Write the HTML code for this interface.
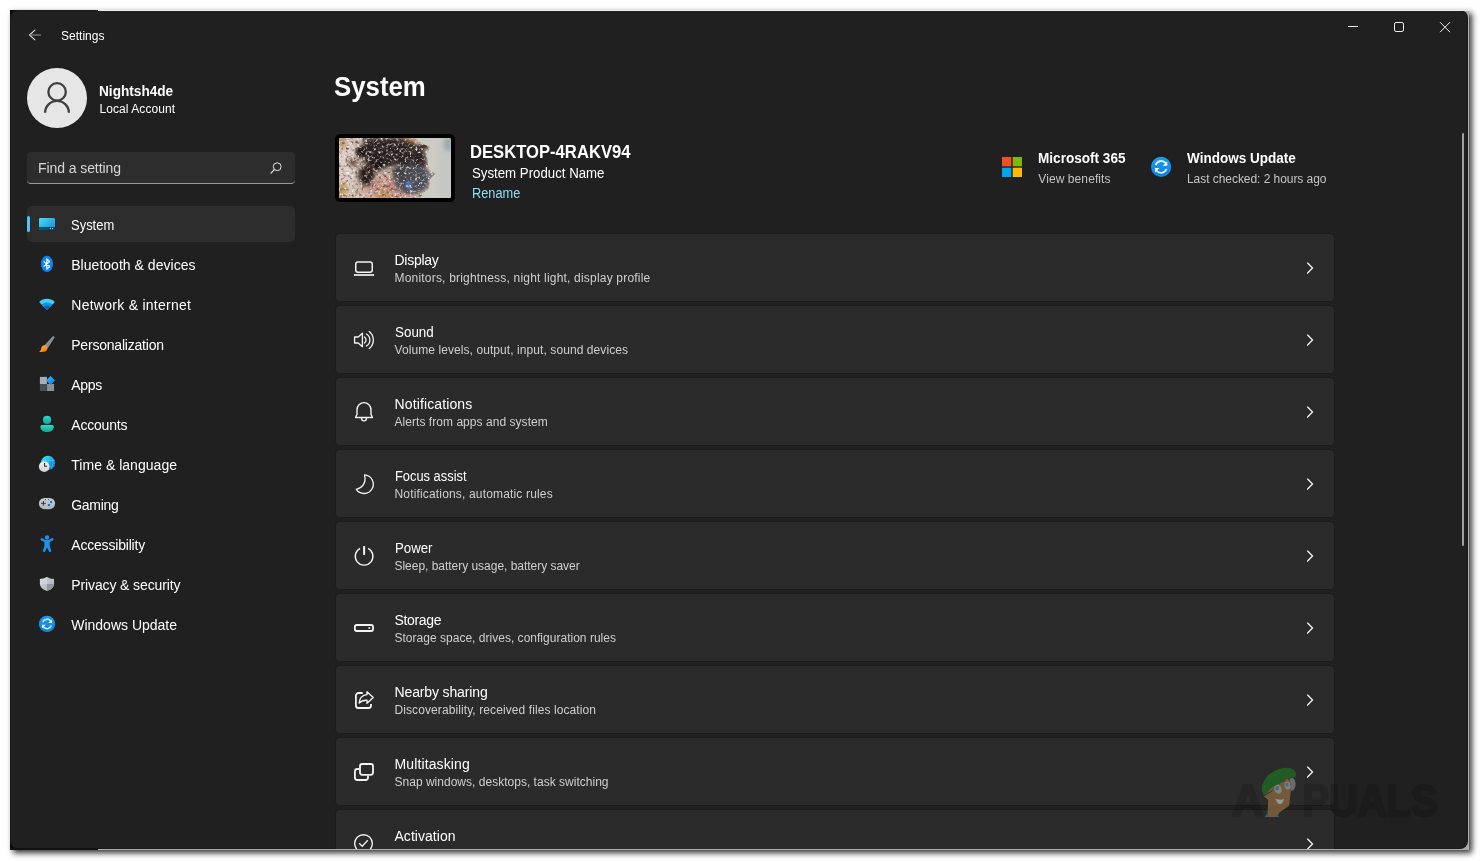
<!DOCTYPE html>
<html lang="en">
<head>
<meta charset="utf-8">
<title>Settings</title>
<style>
html,body{margin:0;padding:0;background:#fff;}
body{width:1480px;height:861px;position:relative;overflow:hidden;font-family:"Liberation Sans",sans-serif;color:#fff;}
.abs{position:absolute;}
#shadow{left:10px;top:10px;width:1459px;height:840px;background:#adadad;box-shadow:2.5px 3px 6px rgba(0,0,0,.8);}
#topstrip{left:98px;top:10px;width:1371px;height:1px;background:#ededed;}
#win{left:10px;top:10px;width:1458px;height:839px;background:#202020;border-radius:8px;overflow:hidden;box-shadow:inset 0 0 0 1px rgba(0,0,0,.2);}
.blk{width:10px;height:10px;background:#03070a;}
#win2{left:98px;top:11px;}
.t{position:absolute;white-space:pre;line-height:1;transform-origin:0 50%;}
.card{position:absolute;left:336px;width:997.5px;height:67px;background:#2b2b2b;border-radius:4px;box-shadow:0 0 0 1px #1c1c1c;}
#sel{left:27px;top:206px;width:268px;height:36px;background:#2d2d2d;border-radius:5px;}
#pill{left:27px;top:216px;width:3px;height:16px;background:#4cc2ff;border-radius:1.5px;}
#search{left:27px;top:152px;width:268px;height:32px;background:#2d2d2d;border-radius:4px;box-sizing:border-box;border-bottom:1px solid #9a9a9a;}
#avatar{left:27px;top:68px;width:60px;height:60px;border-radius:50%;background:#e6e6e6;}
#scroll{left:1462px;top:133px;width:2px;height:413px;background:#a0a0a0;border-radius:1px;}
svg{position:absolute;overflow:visible;}
</style>
</head>
<body>
<div id="shadow" class="abs"></div>
<div class="abs blk" style="left:10px;top:10px"></div><div class="abs blk" style="left:10px;top:839.5px"></div>
<div id="win" class="abs"></div>
<div id="topstrip" class="abs"></div>
<div class="abs" style="left:10px;top:848px;width:88px;height:2px;background:#101214"></div>
<div id="chrome" class="abs" style="left:0;top:0;width:1468px;height:849px;overflow:hidden;will-change:transform">
<div id="avatar" class="abs"></div>
<div id="search" class="abs"></div>
<div id="sel" class="abs"></div>
<div id="pill" class="abs"></div>
<div id="scroll" class="abs"></div>
<div class="card" style="top:234px"></div>
<div class="card" style="top:306px"></div>
<div class="card" style="top:378px"></div>
<div class="card" style="top:450px"></div>
<div class="card" style="top:522px"></div>
<div class="card" style="top:594px"></div>
<div class="card" style="top:666px"></div>
<div class="card" style="top:738px"></div>
<div class="card" style="top:810px"></div>

<!--THUMB_START-->
<div class="abs" style="left:335px;top:134px;width:120px;height:68px;background:#000;border-radius:5.5px;"></div>
<svg width="112" height="60" viewBox="0 0 112 60" style="left:339px;top:138px;overflow:hidden;border-radius:1.5px">
<defs>
<filter id="b2" x="-30%" y="-30%" width="160%" height="160%"><feGaussianBlur stdDeviation="1.3"/></filter>
<filter id="b3" x="-30%" y="-30%" width="160%" height="160%"><feGaussianBlur stdDeviation="2.2"/></filter>
<filter id="b5" x="-30%" y="-30%" width="160%" height="160%"><feGaussianBlur stdDeviation="4"/></filter>
<filter id="spk" x="0" y="0" width="100%" height="100%">
<feTurbulence type="fractalNoise" baseFrequency="0.38" numOctaves="2" seed="7" result="n"/>
<feColorMatrix in="n" type="matrix" values="0 0 0 0 0.93  0 0 0 0 0.9  0 0 0 0 0.88  3.6 0 0 0 -1.95"/>
</filter>
<filter id="spd" x="0" y="0" width="100%" height="100%">
<feTurbulence type="fractalNoise" baseFrequency="0.3" numOctaves="2" seed="23" result="n"/>
<feColorMatrix in="n" type="matrix" values="0 0 0 0 0.12  0 0 0 0 0.08  0 0 0 0 0.07  0 3.8 0 0 -2.0"/>
</filter>
<filter id="spg" x="0" y="0" width="100%" height="100%">
<feTurbulence type="fractalNoise" baseFrequency="0.6" numOctaves="1" seed="3" result="n"/>
<feColorMatrix in="n" type="matrix" values="0 0 0 0 0.55  0 0 0 0 0.58  0 0 0 0 0.58  0 0 2.6 0 -1.35"/>
</filter>
<clipPath id="cLeft"><path d="M0 0 H75 L84 6 L91 9 L88 16 L89 28 L92 33 L97 35 L91 41 L90 50 L84 56 L81 60 H0 Z"/></clipPath>
</defs>
<rect width="112" height="60" fill="#cccbc4"/>
<rect x="100" width="12" height="60" fill="#c3c6c2" filter="url(#b5)"/>
<ellipse cx="109" cy="6" rx="4" ry="7" fill="#98a6ab" filter="url(#b3)"/>
<rect x="76" width="36" height="60" filter="url(#spg)" opacity=".35"/>
<!-- left textured area -->
<g clip-path="url(#cLeft)">
<rect width="98" height="60" fill="#cdb6a8"/>
<ellipse cx="7" cy="28" rx="10" ry="30" fill="#dccfc6" filter="url(#b5)"/>
<ellipse cx="3" cy="52" rx="6" ry="9" fill="#c4a06a" filter="url(#b3)"/>
<ellipse cx="3" cy="5" rx="4" ry="6" fill="#c2935c" filter="url(#b3)"/>
<ellipse cx="50" cy="50" rx="24" ry="11" fill="#c48f80" filter="url(#b5)"/>
<ellipse cx="68" cy="3" rx="9" ry="4" fill="#cc8c62" filter="url(#b3)"/>
<ellipse cx="44" cy="57" rx="8" ry="4" fill="#c0905a" filter="url(#b3)"/>
<!-- dark mass: diagonal band -->
<path d="M27 0 H62 L76 6 L86 14 L88 28 L80 33 L68 30 L58 27 L46 30 L38 34 L28 30 L24 20 L22 10 Z" fill="#2a2320" filter="url(#b3)"/>
<ellipse cx="38" cy="25" rx="5" ry="5" fill="#15110f" filter="url(#b2)"/>
<path d="M64 23 L78 31 L75 34 L62 28 Z" fill="#221c19" filter="url(#b2)"/>
<ellipse cx="22" cy="14" rx="5.5" ry="5.5" fill="#1d1816" filter="url(#b2)"/>
<path d="M62 13 L88 5 L90 9 L72 17 Z" fill="#3a312b" filter="url(#b2)"/>
<!-- lower-left dark stripes -->
<path d="M20 30 L30 26 L36 34 L32 46 L24 48 L19 40 Z" fill="#35261f" filter="url(#b3)"/>
<path d="M24 33 L33 42 M22 38 L30 47 M28 30 L35 38" stroke="#1d1512" stroke-width="2" fill="none" filter="url(#b2)"/>
<ellipse cx="14" cy="24" rx="5" ry="4" fill="#6a4a3a" filter="url(#b3)"/>
<!-- grey-blue speckled area -->
<ellipse cx="73" cy="41" rx="18" ry="15" fill="#484c54" filter="url(#b3)"/>
<ellipse cx="60" cy="34" rx="7" ry="6" fill="#3a3c42" filter="url(#b3)"/>
<ellipse cx="70" cy="47.5" rx="3.6" ry="4.4" fill="#5b7cb8" opacity=".85" filter="url(#b2)"/>
<path d="M86 37 L97 35 L91 42 Z" fill="#707a86" filter="url(#b2)"/>
<rect width="112" height="60" filter="url(#spd)" opacity=".9"/>
<rect width="112" height="60" filter="url(#spk)" opacity=".9"/>
</g>
</svg>

<!--THUMB_END-->
<!--ICONS_START-->
<svg id="ico" width="1480" height="861" viewBox="0 0 1480 861" style="left:0;top:0">
<defs>
<linearGradient id="gSys" x1="0" y1="0" x2="1" y2="1"><stop offset="0" stop-color="#45e0ea"/><stop offset="1" stop-color="#1788de"/></linearGradient>
<linearGradient id="gSysB" x1="0" y1="0" x2="1" y2="0"><stop offset="0" stop-color="#0d5a7c"/><stop offset="1" stop-color="#083c6c"/></linearGradient>
<linearGradient id="gBrushH" x1="0" y1="0" x2="1" y2="1"><stop offset="0" stop-color="#a3aebb"/><stop offset="1" stop-color="#67727e"/></linearGradient>
<linearGradient id="gBrushB" x1="0" y1="0" x2="1" y2="1"><stop offset="0" stop-color="#ffc61e"/><stop offset="1" stop-color="#fb6414"/></linearGradient>
<linearGradient id="gDia" x1="0" y1="0" x2="1" y2="1"><stop offset="0" stop-color="#2fc0fb"/><stop offset="1" stop-color="#0b78de"/></linearGradient>
<linearGradient id="gAcc" x1="0" y1="0" x2="0" y2="1"><stop offset="0" stop-color="#28dcc8"/><stop offset="1" stop-color="#13a596"/></linearGradient>
<linearGradient id="gGlobe" x1="0" y1="0" x2="1" y2="1"><stop offset=".2" stop-color="#2fdcec"/><stop offset=".85" stop-color="#0c6fd6"/></linearGradient>
<linearGradient id="gClock" x1="0" y1="0" x2="0" y2="1"><stop offset="0" stop-color="#f0f0f3"/><stop offset="1" stop-color="#d2d2d6"/></linearGradient>
<linearGradient id="gPad" x1="0" y1="0" x2="0" y2="1"><stop offset="0" stop-color="#c9cdd3"/><stop offset="1" stop-color="#b3b7bd"/></linearGradient>
<linearGradient id="gShield" x1="0" y1="0" x2="1" y2="1"><stop offset="0" stop-color="#d2d6dd"/><stop offset="1" stop-color="#a9adb5"/></linearGradient>
<linearGradient id="gWU" x1="0" y1="0" x2="0" y2="1"><stop offset="0" stop-color="#1c9cf0"/><stop offset="1" stop-color="#0f84e2"/></linearGradient>
<g id="chev"><path d="M1307.6 263.1 L1312.5 268 L1307.6 273" fill="none" stroke="#f2f2f2" stroke-width="1.35" stroke-linecap="round" stroke-linejoin="miter"/></g>
<g id="wu"><circle cx="0" cy="0" r="8.1" fill="url(#gWU)"/>
<path d="M-4.3 -1.6 A4.6 4.6 0 0 1 3.6 -3.0" fill="none" stroke="#fff" stroke-width="1.25"/>
<path d="M4.9 -4.4 V-0.9 H1.4 Z" fill="#fff"/>
<path d="M4.3 1.6 A4.6 4.6 0 0 1 -3.6 3.0" fill="none" stroke="#fff" stroke-width="1.25"/>
<path d="M-4.9 4.4 V0.9 H-1.4 Z" fill="#fff"/></g>
</defs>

<!-- title bar -->
<path d="M34.9 30.1 L29.5 35 L34.9 39.9" fill="none" stroke="#d6d6d6" stroke-width="1.2" stroke-linecap="round" stroke-linejoin="miter"/>
<path d="M30 35 H41" stroke="#8c8c8c" stroke-width="1.1" fill="none"/>
<path d="M1348 26.5 H1358" stroke="#f0f0f0" stroke-width="1"/>
<rect x="1394.5" y="22.5" width="9" height="9" rx="1.6" fill="none" stroke="#f0f0f0" stroke-width="1"/>
<path d="M1440 22.2 L1450 32.2 M1450 22.2 L1440 32.2" stroke="#f0f0f0" stroke-width="1" fill="none"/>

<!-- avatar person -->
<circle cx="57.1" cy="91.9" r="8.7" fill="none" stroke="#404040" stroke-width="2.3"/>
<path d="M45.1 112.8 A11.9 11.9 0 0 1 68.9 112.8" fill="none" stroke="#404040" stroke-width="2.3"/>

<!-- search icon -->
<circle cx="277.2" cy="166.7" r="3.9" fill="none" stroke="#e4e4e4" stroke-width="1"/>
<path d="M274.4 169.5 L271 173.1" stroke="#e4e4e4" stroke-width="1.2" stroke-linecap="round"/>

<!-- nav: system -->
<rect x="39" y="218" width="16" height="12" rx="1.2" fill="url(#gSys)"/>
<path d="M39 227 H55 V228.8 A1.2 1.2 0 0 1 53.8 230 H40.2 A1.2 1.2 0 0 1 39 228.8 Z" fill="url(#gSysB)"/>
<rect x="49.9" y="228" width="1.1" height="1.1" fill="#a9c7d6"/><rect x="52" y="228" width="1.1" height="1.1" fill="#a9c7d6"/>
<!-- bluetooth -->
<ellipse cx="47" cy="263.9" rx="6" ry="8.1" fill="#0a84f2"/>
<path d="M43.6 261.3 L49.7 266.5 L46.8 269.2 V258.8 L49.7 261.5 L43.6 266.7" fill="none" stroke="#fff" stroke-width="1.1" stroke-linejoin="round"/>
<!-- wifi -->
<path d="M47 310 L39.1 302 A11.4 11.4 0 0 1 54.9 302 Z" fill="#3fd0f7"/>
<path d="M47 310 L41.7 304.6 A7.6 7.6 0 0 1 52.3 304.6 Z" fill="#1a90e3"/>
<path d="M47 310 L44 306.9 A4.3 4.3 0 0 1 50 306.9 Z" fill="#0e63b6"/>
<!-- brush -->
<path d="M53 335.9 Q55 336.2 54.5 337.8 L47.6 348.4 L44.2 345.7 Z" fill="url(#gBrushH)"/>
<path d="M44.4 345.2 C46.6 345 48.2 347 47.2 349.5 C46.2 352 42.2 352.4 39.1 351.7 C41 350.8 41 349.6 41.3 348.1 C41.6 346.4 42.9 345.3 44.4 345.2 Z" fill="url(#gBrushB)"/>
<!-- apps -->
<rect x="39.9" y="376.9" width="7" height="7.1" fill="#a9aeb6"/>
<rect x="39.9" y="384" width="7" height="7" fill="#4b4f53"/>
<rect x="47.05" y="384" width="7.05" height="7" fill="#8b8f96"/>
<path d="M50.55 376 L55.05 380.5 L50.55 385.1 L46.1 380.5 Z" fill="url(#gDia)"/>
<!-- accounts -->
<circle cx="47.05" cy="419.9" r="4.1" fill="url(#gAcc)"/>
<path d="M41.9 424.9 H52.3 A1.5 1.5 0 0 1 53.8 426.4 C53.8 430 51 432 47.1 432 C43.2 432 40.4 430 40.4 426.4 A1.5 1.5 0 0 1 41.9 424.9 Z" fill="url(#gAcc)"/>
<!-- time -->
<circle cx="48" cy="463" r="7.15" fill="url(#gGlobe)"/>
<path d="M41 460.5 H55 M42 466 H54.7 M48 456 V470 M44.5 457 Q41.5 463 44.5 469 M51.5 457 Q54.5 463 51.5 469" stroke="#4fe0f2" stroke-width=".6" fill="none" opacity=".7"/>
<circle cx="44.2" cy="466.6" r="5.3" fill="url(#gClock)"/>
<path d="M44.6 462.9 V466.3 H47.1" fill="none" stroke="#2a2a2a" stroke-width="1.05"/>
<!-- gaming -->
<rect x="38.9" y="497.9" width="16.2" height="11.3" rx="5.6" fill="url(#gPad)"/>
<path d="M43.4 500.9 V505.7 M41 503.3 H45.8" stroke="#34373b" stroke-width="1"/>
<circle cx="45.4" cy="499.6" r=".6" fill="#44474b"/><circle cx="48.5" cy="499.6" r=".6" fill="#44474b"/>
<rect x="50" y="500.9" width="2.1" height="2.2" fill="#0b80e2"/><rect x="47.9" y="504" width="2.2" height="2.1" fill="#0b80e2"/>
<!-- accessibility -->
<circle cx="47.05" cy="537.5" r="2.15" fill="#1b97ee"/>
<path d="M40.7 538.4 Q40.2 539.7 41.3 540.4 L44.4 541.9 V546 L42.7 551 Q43.3 552.4 44.9 551.8 L47.05 547.4 L49.2 551.8 Q50.8 552.4 51.4 551 L49.7 546 V541.9 L52.8 540.4 Q53.9 539.7 53.4 538.4 Q52.6 537.7 51.7 538.2 L48.6 539.9 H45.5 L42.4 538.2 Q41.5 537.7 40.7 538.4 Z" fill="#1b93ea"/>
<!-- privacy -->
<path d="M47 576.9 Q44 579 39.9 579 V584 Q39.9 588.6 47 591.1 Q54.1 588.6 54.1 584 V579 Q50 579 47 576.9 Z" fill="url(#gShield)"/>
<path d="M47 584 H54.1 Q54.1 588.6 47 591.1 Z" fill="#94989f"/>
<path d="M47 576.9 Q44 579 39.9 579 V584 H47 Z" fill="#d6dae0" opacity=".6"/>
<!-- windows update -->
<use href="#wu" transform="translate(47 623.9)"/>

<!-- MS logo -->
<rect x="1002" y="157" width="9.3" height="9.3" fill="#f25022"/><rect x="1012.7" y="157" width="9.3" height="9.3" fill="#7fba00"/>
<rect x="1002" y="167.7" width="9.3" height="9.3" fill="#00a4ef"/><rect x="1012.7" y="167.7" width="9.3" height="9.3" fill="#ffb900"/>
<use href="#wu" transform="translate(1161.1 166.9) scale(1.25)"/>

<!-- card icons -->
<g fill="none" stroke="#f4f4f4" stroke-width="1.5" stroke-linejoin="round">
<rect x="355.75" y="261.95" width="16.5" height="10.3" rx="2.2"/>
<path d="M353.9 275 H374.1" stroke-width="1.7"/>
</g>
<g fill="none" stroke="#f4f4f4" stroke-width="1.3" stroke-linejoin="round" stroke-linecap="round">
<path d="M354.6 337 H358.2 L362.4 333.3 V346.7 L358.2 343 H354.6 Z"/>
<path d="M364.4 337 A3.6 3.6 0 0 1 364.4 343"/>
<path d="M366.4 334 A6.9 6.9 0 0 1 366.4 346"/>
<path d="M369.3 331.4 A11.2 11.2 0 0 1 369.3 348.6"/>
</g>
<g fill="none" stroke="#f4f4f4" stroke-width="1.4" stroke-linejoin="round" stroke-linecap="round">
<path d="M357 409.6 A7 7 0 0 1 371 409.6 V414.3 L372.4 417.5 H355.6 L357 414.3 Z"/>
<path d="M361.5 418 A2.5 2.9 0 0 0 366.5 418"/>
</g>
<path d="M364.5 474.9 A9.3 9.3 0 1 1 356.3 489.4 C361.5 488.3 366.8 483.5 364.5 474.9 Z" fill="none" stroke="#f4f4f4" stroke-width="1.3" stroke-linejoin="round"/>
<g fill="none" stroke="#f4f4f4" stroke-linecap="butt">
<path d="M360.1 548.4 A8.85 8.85 0 1 0 368.1 548.4" stroke-width="1.4"/>
<path d="M364.1 546.1 V554.9" stroke-width="2"/>
</g>
<rect x="354.85" y="625" width="18.2" height="6" rx="2" fill="none" stroke="#f4f4f4" stroke-width="1.8"/>
<circle cx="369.3" cy="627.9" r="1" fill="#f4f4f4"/>
<g fill="none" stroke="#f4f4f4" stroke-linejoin="round">
<path d="M362.8 693 H358.5 A2.6 2.6 0 0 0 355.9 695.6 V705.4 A2.6 2.6 0 0 0 358.5 708 H368.4 A2.6 2.6 0 0 0 371 705.4 V704" stroke-width="1.8"/>
<path d="M367 691.7 L373.2 697.6 L367 703.3 V700.3 C363.4 700.1 361 701 359.1 703.1 C359.5 698 362.5 695 367 694.6 Z" stroke-width="1.4"/>
</g>
<g fill="none" stroke="#f4f4f4" stroke-width="1.8" stroke-linejoin="round">
<rect x="360" y="764" width="13" height="10.8" rx="2.2"/>
<path d="M359.1 769 H357.4 A2.5 2.5 0 0 0 354.9 771.5 V777.5 A2.5 2.5 0 0 0 357.4 780 H365.5 A2.5 2.5 0 0 0 368 777.5 V775.7"/>
</g>
<circle cx="363.5" cy="843.6" r="8.85" fill="none" stroke="#f4f4f4" stroke-width="1.35"/>
<path d="M359.2 843.3 L362.2 846.3 L367.8 840.3" fill="none" stroke="#f4f4f4" stroke-width="1.3"/>

<!-- watermark -->
<g id="wm">
<text x="1232" y="816.3" font-family="'Liberation Sans',sans-serif" font-weight="700" font-size="44" fill="#000" stroke="#000" opacity=".15" stroke-width="2.4" stroke-linejoin="round">A</text>
<text x="1302.5" y="816.3" font-family="'Liberation Sans',sans-serif" font-weight="700" font-size="44" fill="#000" stroke="#000" opacity=".15" stroke-width="2.4" stroke-linejoin="round" textLength="135" lengthAdjust="spacingAndGlyphs">PUALS</text>
<g opacity=".78">
<path d="M1267.2 817 L1268.2 800 L1263.5 796 L1270 788 L1283 781.5 L1289.5 779.5 L1291 790 L1289 806 L1280 812 L1276.5 817 Z" fill="#86683f"/>
<path d="M1261.8 790 C1261.5 780 1270 770.5 1283 768 C1290 766.8 1295.8 769.5 1296 774 L1295.3 777.5 L1288 778 L1283 781.5 L1272 787 L1266 794 L1263.8 796.5 Z" fill="#1f6a24"/>
<path d="M1285.5 779 L1288.5 778 L1288 781.5 L1284 783 Z" fill="#a05a2a"/>
<ellipse cx="1278" cy="789.3" rx="3.6" ry="4.6" fill="#9c9c9c" transform="rotate(-20 1278 789.3)"/>
<ellipse cx="1287.6" cy="785.5" rx="2.9" ry="4" fill="#9c9c9c" transform="rotate(-15 1287.6 785.5)"/>
<ellipse cx="1277.2" cy="788.3" rx="1.8" ry="2.3" fill="#2e8ea0"/><ellipse cx="1287" cy="784.8" rx="1.5" ry="2" fill="#2e8ea0"/>
<path d="M1289.5 778.5 Q1295 776.5 1295.5 783 Q1296 790 1291 791 Z" fill="#7d7d7d"/>
<path d="M1275.2 798.5 Q1280.5 801 1284.2 798.8 Q1282.5 804.5 1279 804 Q1276.5 802.5 1275.2 798.5 Z" fill="#b9b9b9"/>
<path d="M1264.8 817 L1267.2 813 L1267.4 817 Z M1275.5 817 L1277 814.5 L1279.3 817 Z" fill="#1e7c90"/>
<path d="M1263.5 796 L1272.8 790.5" stroke="#2a2a2a" stroke-width=".8" fill="none"/>
</g>
</g>

<!-- chevrons -->
<use href="#chev"/><use href="#chev" y="72"/><use href="#chev" y="144"/><use href="#chev" y="216"/><use href="#chev" y="288"/><use href="#chev" y="360"/><use href="#chev" y="432"/><use href="#chev" y="504"/><use href="#chev" y="576"/>
</svg>

<!--ICONS_END-->
<span class="t" style="left:61px;top:29.84px;font-size:12px;letter-spacing:0.020px;">Settings</span>
<span class="t" style="left:99px;top:84.35px;font-size:14px;font-weight:700;transform:scaleX(0.9733);">Nightsh4de</span>
<span class="t" style="left:99.5px;top:102.84px;font-size:12px;letter-spacing:0.065px;">Local Account</span>
<span class="t" style="left:38px;top:161.15px;font-size:14px;color:#d6d6d6;letter-spacing:-0.082px;">Find a setting</span>
<span class="t" style="left:71.25px;top:218.15px;font-size:14px;transform:scaleX(0.9264);">System</span>
<span class="t" style="left:71.25px;top:258.15px;font-size:14px;letter-spacing:0.028px;">Bluetooth &amp; devices</span>
<span class="t" style="left:71.25px;top:298.15px;font-size:14px;letter-spacing:0.269px;">Network &amp; internet</span>
<span class="t" style="left:71.25px;top:338.15px;font-size:14px;letter-spacing:-0.213px;">Personalization</span>
<span class="t" style="left:71.25px;top:378.15px;font-size:14px;letter-spacing:-0.307px;">Apps</span>
<span class="t" style="left:71.25px;top:418.15px;font-size:14px;letter-spacing:-0.192px;">Accounts</span>
<span class="t" style="left:71.25px;top:458.15px;font-size:14px;letter-spacing:0.030px;">Time &amp; language</span>
<span class="t" style="left:71.25px;top:498.15px;font-size:14px;letter-spacing:-0.306px;">Gaming</span>
<span class="t" style="left:71.25px;top:538.15px;font-size:14px;letter-spacing:-0.188px;">Accessibility</span>
<span class="t" style="left:71.25px;top:578.15px;font-size:14px;letter-spacing:-0.118px;">Privacy &amp; security</span>
<span class="t" style="left:71.25px;top:618.15px;font-size:14px;letter-spacing:-0.006px;">Windows Update</span>
<span class="t" style="left:334.2px;top:72.55px;font-size:28px;font-weight:700;transform:scaleX(0.9215);">System</span>
<span class="t" style="left:470.2px;top:143.34px;font-size:18.5px;font-weight:700;transform:scaleX(0.8989);">DESKTOP-4RAKV94</span>
<span class="t" style="left:471.5px;top:166.15px;font-size:14px;transform:scaleX(0.9460);">System Product Name</span>
<span class="t" style="left:471.8px;top:186.15px;font-size:14px;color:#8fdef4;transform:scaleX(0.9127);">Rename</span>
<span class="t" style="left:1038.25px;top:151.15px;font-size:14px;font-weight:700;transform:scaleX(0.9695);">Microsoft 365</span>
<span class="t" style="left:1038.25px;top:172.84px;font-size:12px;color:#c4c4c4;letter-spacing:0.091px;">View benefits</span>
<span class="t" style="left:1187px;top:151.15px;font-size:14px;font-weight:700;transform:scaleX(0.9653);">Windows Update</span>
<span class="t" style="left:1187px;top:172.84px;font-size:12px;color:#c4c4c4;letter-spacing:-0.053px;">Last checked: 2 hours ago</span>
<span class="t" style="left:394.5px;top:253.15px;font-size:14px;letter-spacing:-0.276px;">Display</span>
<span class="t" style="left:394.5px;top:272.34px;font-size:12px;color:#cfcfcf;letter-spacing:0.196px;">Monitors, brightness, night light, display profile</span>
<span class="t" style="left:394.5px;top:325.15px;font-size:14px;transform:scaleX(0.9572);">Sound</span>
<span class="t" style="left:394.5px;top:344.34px;font-size:12px;color:#cfcfcf;letter-spacing:0.080px;">Volume levels, output, input, sound devices</span>
<span class="t" style="left:394.5px;top:397.15px;font-size:14px;letter-spacing:0.124px;">Notifications</span>
<span class="t" style="left:394.5px;top:416.34px;font-size:12px;color:#cfcfcf;letter-spacing:0.046px;">Alerts from apps and system</span>
<span class="t" style="left:394.5px;top:469.15px;font-size:14px;transform:scaleX(0.9189);">Focus assist</span>
<span class="t" style="left:394.5px;top:488.34px;font-size:12px;color:#cfcfcf;letter-spacing:0.165px;">Notifications, automatic rules</span>
<span class="t" style="left:394.5px;top:541.15px;font-size:14px;transform:scaleX(0.9449);">Power</span>
<span class="t" style="left:394.5px;top:560.34px;font-size:12px;color:#cfcfcf;letter-spacing:-0.027px;">Sleep, battery usage, battery saver</span>
<span class="t" style="left:394.5px;top:613.15px;font-size:14px;letter-spacing:-0.341px;">Storage</span>
<span class="t" style="left:394.5px;top:632.34px;font-size:12px;color:#cfcfcf;letter-spacing:0.017px;">Storage space, drives, configuration rules</span>
<span class="t" style="left:394.5px;top:685.15px;font-size:14px;letter-spacing:-0.134px;">Nearby sharing</span>
<span class="t" style="left:394.5px;top:704.34px;font-size:12px;color:#cfcfcf;letter-spacing:0.093px;">Discoverability, received files location</span>
<span class="t" style="left:394.5px;top:757.15px;font-size:14px;letter-spacing:0.116px;">Multitasking</span>
<span class="t" style="left:394.5px;top:776.34px;font-size:12px;color:#cfcfcf;letter-spacing:0.015px;">Snap windows, desktops, task switching</span>
<span class="t" style="left:394.5px;top:829.15px;font-size:14px;letter-spacing:0.033px;">Activation</span>
</div>
</body>
</html>
